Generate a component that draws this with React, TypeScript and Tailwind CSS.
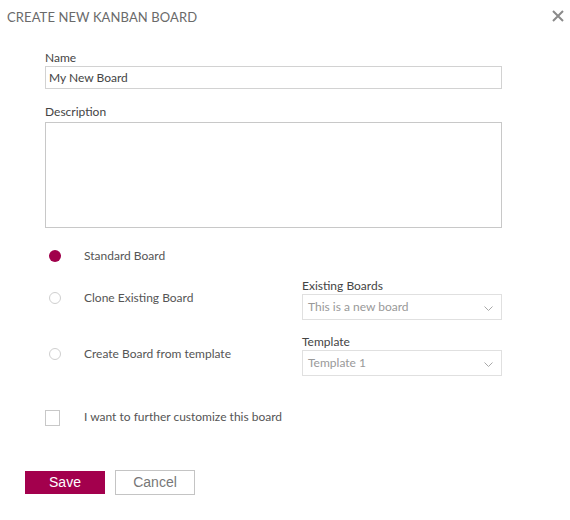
import React from "react";

function Chevron() {
  return (
    <svg width="9" height="5" viewBox="0 0 9 5" className="text-[#a8a8a8] mr-[1px] mt-[2px]">
      <path d="M0.5 0.5 L4.5 4.5 L8.5 0.5" fill="none" stroke="currentColor" strokeWidth="1" />
    </svg>
  );
}

function Radio({ checked }: { checked?: boolean }) {
  return checked ? (
    <span className="block w-[12px] h-[12px] rounded-full bg-[#a0004b]" />
  ) : (
    <span className="block w-[12px] h-[12px] rounded-full border border-[#cfcfcf] bg-white" />
  );
}

export default function App() {
  return (
    <div
      className="w-[570px] h-[520px] bg-white text-[#555] relative"
      style={{ fontFamily: "Lato, 'Open Sans', sans-serif" }}
    >
      <div className="flex justify-between items-start pl-[7px] pr-[6px] pt-[7px]">
        <div className="text-[13px] leading-[20px] text-[#6a6a6a] tracking-[0.1px]">CREATE NEW KANBAN BOARD</div>
        <svg width="12" height="12" viewBox="0 0 12 12" className="mt-[3px]">
          <path d="M1 1 L11 11 M11 1 L1 11" stroke="#8a8a8a" strokeWidth="2" />
        </svg>
      </div>

      <div className="pl-[45px] w-[502px] mt-[23px]">
        <div className="text-[12px] leading-[16px] text-[#444]">Name</div>
        <div className="h-[23px] border border-[#d2d2d2] flex items-center pl-[3px] text-[12px] text-[#444]">
          My New Board
        </div>
        <div className="mt-[15px] text-[12px] leading-[16px] text-[#444]">Description</div>
        <div className="mt-[2px] h-[106px] border border-[#c8c8c8]" />

        <div className="mt-[21px] flex items-center h-[14px]">
          <div className="w-[20px] pl-[4px] flex"><Radio checked /></div>
          <div className="ml-[19px] text-[12px]">Standard Board</div>
        </div>

        <div className="mt-[15px] flex items-start">
          <div className="flex items-center h-[14px] mt-[13px] flex-1">
            <div className="w-[20px] pl-[4px] flex"><Radio /></div>
            <div className="ml-[19px] text-[12px]">Clone Existing Board</div>
          </div>
          <div className="w-[200px]">
            <div className="text-[12px] leading-[16px] text-[#444]">Existing Boards</div>
            <div className="h-[26px] border border-[#e0e0e0] flex items-center justify-between pl-[5px] pr-[7px] text-[12px] text-[#999]">
              <span>This is a new board</span>
              <Chevron />
            </div>
          </div>
        </div>

        <div className="mt-[14px] flex items-start">
          <div className="flex items-center h-[14px] mt-[13px] flex-1">
            <div className="w-[20px] pl-[4px] flex"><Radio /></div>
            <div className="ml-[19px] text-[12px]">Create Board from template</div>
          </div>
          <div className="w-[200px]">
            <div className="text-[12px] leading-[16px] text-[#444]">Template</div>
            <div className="h-[26px] border border-[#e0e0e0] flex items-center justify-between pl-[5px] pr-[7px] text-[12px] text-[#999]">
              <span>Template 1</span>
              <Chevron />
            </div>
          </div>
        </div>

        <div className="mt-[34px] flex items-center">
          <span className="block w-[15px] h-[16px] border border-[#c8c8c8]" />
          <div className="ml-[24px] text-[12px] -mt-[2px]">I want to further customize this board</div>
        </div>
      </div>

      <div
        className="flex items-start gap-[10px] pl-[25px] mt-[45px]"
        style={{ fontFamily: "'Liberation Sans', Arial, sans-serif" }}
      >
        <button className="w-[80px] h-[23px] bg-[#a3004d] text-white text-[14px] leading-[23px]">Save</button>
        <button className="w-[80px] h-[25px] -mt-[1px] border border-[#c4c4c4] bg-white text-[#777] text-[14px] leading-[23px]">Cancel</button>
      </div>
    </div>
  );
}
